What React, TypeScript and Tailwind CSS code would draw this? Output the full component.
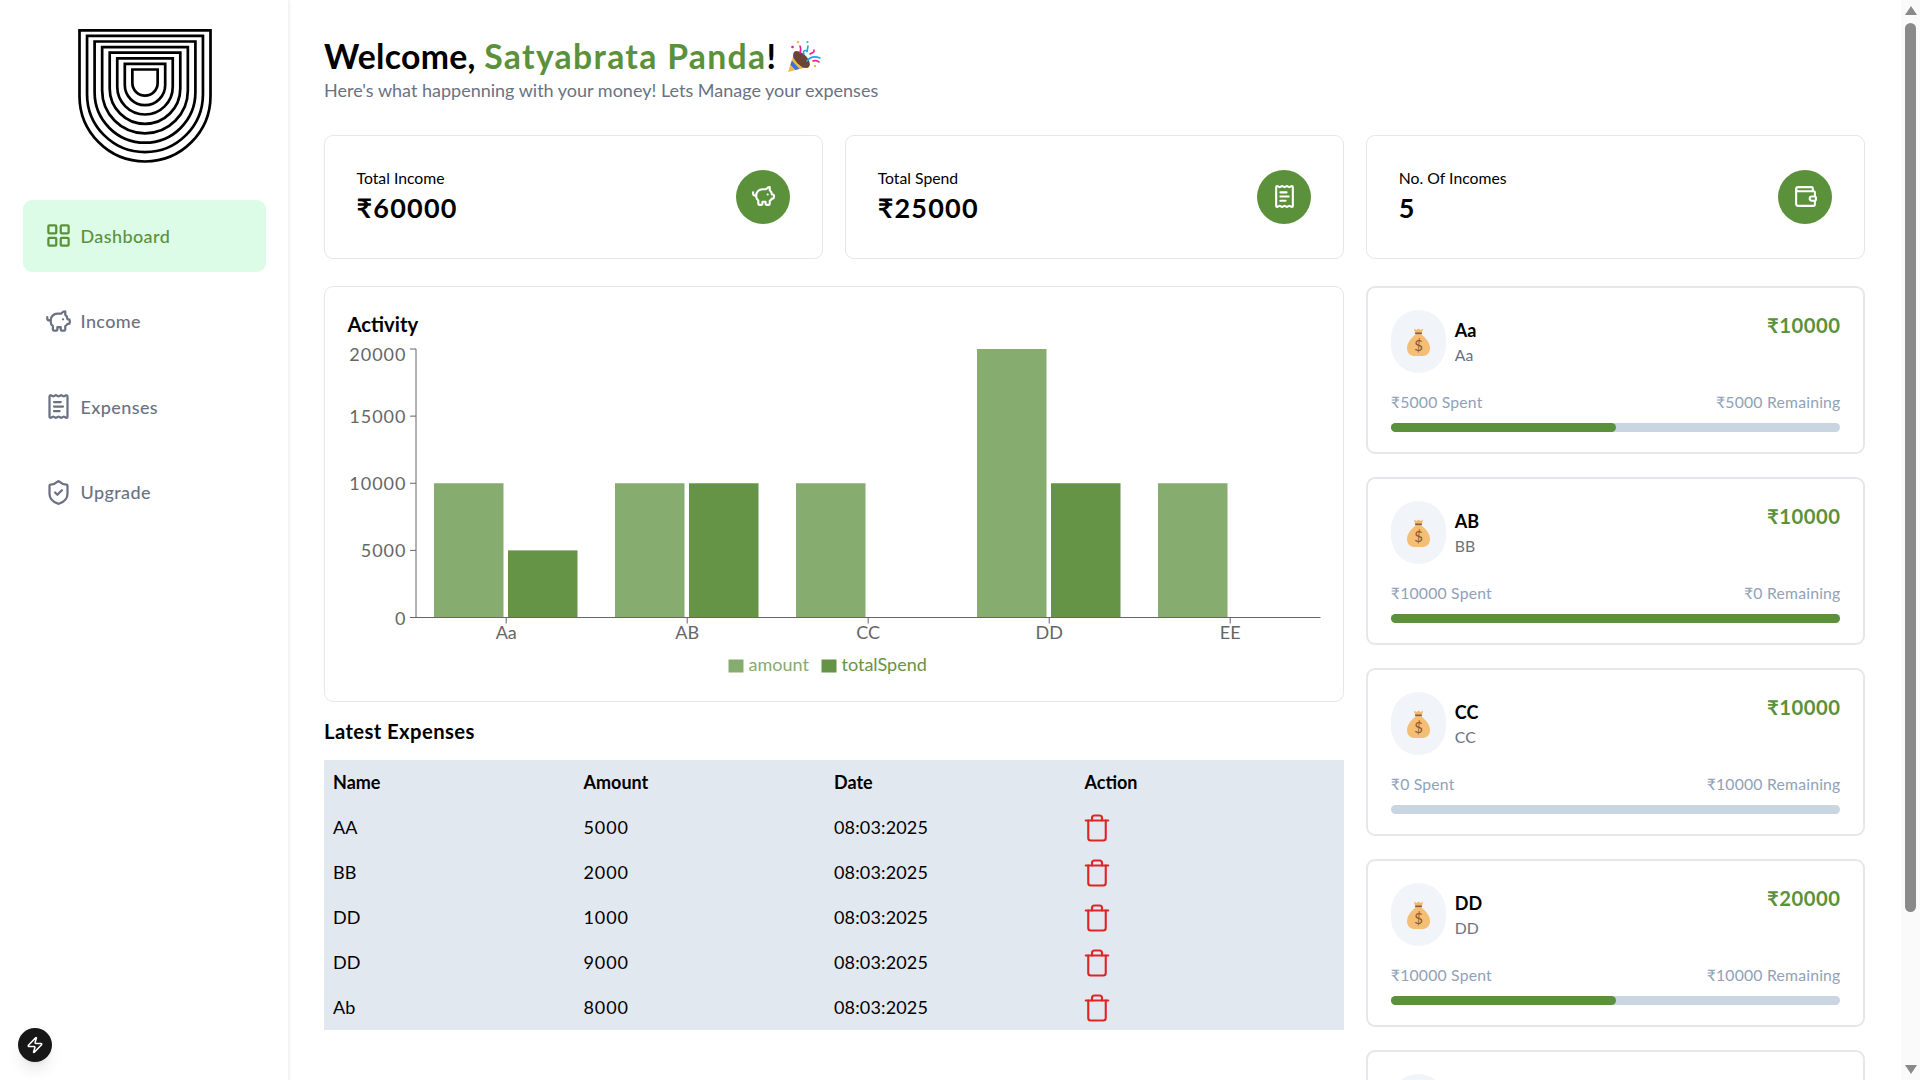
import { LayoutGrid, PiggyBank, ReceiptText, ShieldCheck, Wallet, Trash, Zap } from 'lucide-react';

const navItems = [
  { label: 'Dashboard', icon: LayoutGrid, active: true },
  { label: 'Income', icon: PiggyBank, active: false },
  { label: 'Expenses', icon: ReceiptText, active: false },
  { label: 'Upgrade', icon: ShieldCheck, active: false },
];

const stats = [
  { label: 'Total Income', value: '₹60000', icon: PiggyBank },
  { label: 'Total Spend', value: '₹25000', icon: ReceiptText },
  { label: 'No. Of Incomes', value: '5', icon: Wallet },
];

const budgets = [
  { name: 'Aa', sub: 'Aa', amount: 10000, spent: 5000 },
  { name: 'AB', sub: 'BB', amount: 10000, spent: 10000 },
  { name: 'CC', sub: 'CC', amount: 10000, spent: 0 },
  { name: 'DD', sub: 'DD', amount: 20000, spent: 10000 },
  { name: 'EE', sub: 'EE', amount: 10000, spent: 0 },
];

const expenses = [
  { name: 'AA', amount: 5000 },
  { name: 'BB', amount: 2000 },
  { name: 'DD', amount: 1000 },
  { name: 'DD', amount: 9000 },
  { name: 'Ab', amount: 8000 },
];

const chartData = [
  { name: 'Aa', amount: 10000, totalSpend: 5000 },
  { name: 'AB', amount: 10000, totalSpend: 10000 },
  { name: 'CC', amount: 10000, totalSpend: 0 },
  { name: 'DD', amount: 20000, totalSpend: 10000 },
  { name: 'EE', amount: 10000, totalSpend: 0 },
];

function Logo() {
  const rings = [0, 1, 2, 3, 4, 5, 6, 7];
  return (
    <svg width="134" height="134" viewBox="0 0 134 134" fill="none" stroke="#000" strokeWidth="2.7">
      {rings.map((i) => {
        const half = 65.5 - i * 7.55;
        const top = 1.3 + i * 5.6;
        const bottom = 132.5 - i * 9.4;
        const left = 67 - half;
        const right = 67 + half;
        return (
          <path
            key={i}
            d={`M${left} ${top}H${right}V${bottom - half}A${half} ${half} 0 0 1 ${left} ${bottom - half}Z`}
          />
        );
      })}
    </svg>
  );
}

// party popper, drawn because the installed emoji has another look
function Popper() {
  return (
    <svg width="36" height="36" viewBox="4 4 36 36" className="inline-block align-[-7px] ml-[11px]">
      <path d="M5 36L11.5 16.5L25 31Z" fill="#f4b942" />
      <path d="M8.8 24.6L16.4 32.8L12.4 34L7.4 28.8Z" fill="#3f6fd8" />
      <path d="M11.2 17.4L20.8 28.4L24 31L19.8 32L9.8 21.4Z" fill="#3f6fd8" opacity="0.85" />
      <ellipse cx="18.5" cy="23.5" rx="10.5" ry="5.5" transform="rotate(45 18.5 23.5)" fill="#6b4433" />
      <g fill="none" strokeLinecap="round" strokeWidth="1.6">
        <path d="M21 18c-2-3 2-5 3-2l1-6" stroke="#1aa9e6" />
        <path d="M24 25c3-4 8-5 13-3" stroke="#1aa9e6" />
        <path d="M27 18c2-1 5-2 4-4" stroke="#ec1c8e" />
        <path d="M17 17c1-3 1-5 0-7" stroke="#ec1c8e" />
        <path d="M30 25c2-1 5 0 6 1" stroke="#ec1c8e" />
      </g>
      <circle cx="15" cy="6" r="1.2" fill="#f4b942" />
      <circle cx="9.5" cy="11" r="1.3" fill="#ec1c8e" />
      <circle cx="32" cy="30" r="1.2" fill="#f4b942" />
      <circle cx="24.5" cy="6" r="1" fill="#1aa9e6" />
    </svg>
  );
}

function MoneyBag() {
  return (
    <svg width="23" height="28" viewBox="0 0 23 28">
      <path d="M7 0.5L9.5 2L11.5 0.5L13.5 2L16 0.5L15 5H8Z" fill="#f2b76c" />
      <rect x="8" y="4.5" width="7" height="2" rx="1" fill="#8a5a3a" />
      <path d="M8.5 6.5H14.5C19 10 23 15 23 20C23 25.5 19.5 28 15 28H8C3.5 28 0 25.5 0 20C0 15 4 10 8.5 6.5Z" fill="#f4bf75" />
      <text x="11.5" y="23" textAnchor="middle" fontSize="15" fill="#8a5a3a">
        $
      </text>
    </svg>
  );
}

function Sidebar() {
  return (
    <aside className="w-[289px] shrink-0 h-full border-r border-gray-100 shadow-sm py-[22.5px] pl-[23px] pr-[22px] relative">
      <div className="flex justify-center pt-[6px] mb-[37px]">
        <Logo />
      </div>
      {navItems.map((item) => (
        <div
          key={item.label}
          className={`flex items-center gap-[9px] h-[72px] mb-[13.5px] px-[22.5px] rounded-[9px] text-[18px] tracking-[0.4px] font-medium ${
            item.active ? 'bg-[#dcfce7] text-[#5b913b]' : 'text-gray-500'
          }`}
        >
          <item.icon size={27} strokeWidth={2} className="-ml-[1px]" />
          <span className="pt-[1px]">{item.label}</span>
        </div>
      ))}
    </aside>
  );
}

function StatCard({ label, value, icon: Icon }: { label: string; value: string; icon: typeof Wallet }) {
  return (
    <div className="flex items-center justify-between border border-gray-200 rounded-[9px] p-[31.5px] h-[124px]">
      <div>
        <div className="text-[15.75px] leading-[22.5px] text-black">{label}</div>
        <div className="text-[27px] leading-[36px] tracking-[1.2px] font-bold text-black">{value}</div>
      </div>
      <div className="flex items-center justify-center w-[54px] h-[54px] rounded-full bg-[#5b913b] text-white">
        <Icon size={25} />
      </div>
    </div>
  );
}

function ActivityChart() {
  const y = (v: number) => 617.5 - (v / 20000) * 268.5;
  return (
    <svg width="975" height="342" viewBox="347.5 344 975 342" className="block mt-[5px]">
      <g fontSize="18" fill="#666">
        {[0, 5000, 10000, 15000, 20000].map((v) => (
          <g key={v}>
            <line x1="409.5" x2="415.5" y1={y(v)} y2={y(v)} stroke="#666" />
            <text x="406" y={v === 20000 ? y(v) + 12 : y(v) + 7} textAnchor="end" letterSpacing="1">
              {v}
            </text>
          </g>
        ))}
        {chartData.map((d, i) => (
          <g key={d.name}>
            <rect x={433.5 + i * 181} y={y(d.amount)} width="69.5" height={617.5 - y(d.amount)} fill="#86ac6f" />
            {d.totalSpend > 0 && (
              <rect
                x={507.5 + i * 181}
                y={y(d.totalSpend)}
                width="69.5"
                height={617.5 - y(d.totalSpend)}
                fill="#659446"
              />
            )}
            <line x1={505.7 + i * 181} x2={505.7 + i * 181} y1="617.5" y2="623.5" stroke="#666" />
            <text x={505.7 + i * 181} y="639" textAnchor="middle">
              {d.name}
            </text>
          </g>
        ))}
      </g>
      <line x1="415.5" x2="415.5" y1="349" y2="617.5" stroke="#666" />
      <line x1="415.5" x2="1320" y1="617.5" y2="617.5" stroke="#666" />
      <rect x="728" y="659.5" width="15" height="13" fill="#86ac6f" />
      <text x="748" y="671" fontSize="18" fill="#86ac6f">
        amount
      </text>
      <rect x="821" y="659.5" width="15" height="13" fill="#659446" />
      <text x="841" y="671" fontSize="18" fill="#659446">
        totalSpend
      </text>
    </svg>
  );
}

function BudgetCard({ name, sub, amount, spent }: (typeof budgets)[number]) {
  const pct = (spent / amount) * 100;
  return (
    <div className="border-2 border-gray-200 rounded-[9px] p-[22.5px] h-[168px] shrink-0">
      <div className="flex justify-between">
        <div className="flex gap-[9px] items-center">
          <div className="flex items-center justify-center w-[55px] h-[63px] rounded-full bg-slate-100">
            <MoneyBag />
          </div>
          <div className="pt-[1px]">
            <div className="text-[18px] leading-[27px] font-bold text-black">{name}</div>
            <div className="text-[15.75px] leading-[22.5px] text-gray-500">{sub}</div>
          </div>
        </div>
        <div className="text-[20.25px] leading-[27px] tracking-[0.5px] font-bold text-[#5b913b] pt-[2px]">₹{amount}</div>
      </div>
      <div className="flex justify-between mt-[18px] text-[15.75px] leading-[22.5px] tracking-[0.2px] text-slate-400">
        <span>₹{spent} Spent</span>
        <span>₹{amount - spent} Remaining</span>
      </div>
      <div className="h-[9px] mt-[9px] rounded-full bg-slate-300">
        <div className="h-[9px] rounded-full bg-[#5b913b]" style={{ width: `${pct}%` }} />
      </div>
    </div>
  );
}

function Scrollbar() {
  return (
    <div className="w-[19px] shrink-0 h-full bg-[#fafafa] flex flex-col items-center relative">
      <div className="mt-[6px] w-0 h-0 border-x-[6px] border-x-transparent border-b-[9px] border-b-[#8a8a8a]" />
      <div className="mt-[8px] w-[11px] h-[889px] rounded-full bg-[#8a8a8a]" />
      <div className="mt-auto mb-[6px] w-0 h-0 border-x-[6px] border-x-transparent border-t-[9px] border-t-[#8a8a8a]" />
    </div>
  );
}

export default function App() {
  return (
    <div className="flex h-screen overflow-hidden bg-white font-['Lato','Liberation_Sans',sans-serif]">
      <Sidebar />

      <main className="flex-1 min-w-0 h-full overflow-hidden py-[36px] pl-[35px] pr-[36px]">
        <h2 className="text-[33.75px] leading-[40.5px] font-bold text-black">
          <span className="tracking-[0.3px]">Welcome, </span>
          <span className="text-[#5b913b] tracking-[1.3px]">Satyabrata Panda</span>!
          <Popper />
        </h2>
        <p className="text-[18px] leading-[27px] text-gray-500">
          Here's what happenning with your money! Lets Manage your expenses
        </p>

        <div className="grid grid-cols-3 gap-[22.5px] mt-[31px]">
          {stats.map((s) => (
            <StatCard key={s.label} {...s} />
          ))}
        </div>

        <div className="grid grid-cols-3 gap-[22.5px] mt-[27px]">
          <div className="col-span-2">
            <div className="border border-gray-200 rounded-[9px] px-[22.5px] pt-[22.5px] h-[416px]">
              <h2 className="text-[20.25px] leading-[30px] font-bold text-black">Activity</h2>
              <ActivityChart />
            </div>

            <h2 className="text-[20.25px] leading-[30px] tracking-[0.4px] font-bold text-black mt-[14px] mb-[14px]">
              Latest Expenses
            </h2>
            <div className="bg-[#e2e8f0] text-[18px] text-black">
              <div className="grid grid-cols-[250.5px_250.5px_250.5px_1fr] h-[45px] items-center px-[9px] pt-[1px] font-bold">
                <div>Name</div>
                <div>Amount</div>
                <div>Date</div>
                <div>Action</div>
              </div>
              {expenses.map((e, i) => (
                <div key={i} className="grid grid-cols-[250.5px_250.5px_250.5px_1fr] h-[45px] items-center px-[9px] pt-[1px]">
                  <div>{e.name}</div>
                  <div className="tracking-[0.9px]">{e.amount}</div>
                  <div className="tracking-[0.15px]">08:03:2025</div>
                  <div className="h-[30px]">
                    <Trash size={30} strokeWidth={1.7} className="text-[#dc2626] -ml-[3px]" />
                  </div>
                </div>
              ))}
            </div>
          </div>

          <div className="flex flex-col gap-[23px]">
            {budgets.map((b) => (
              <BudgetCard key={b.name} {...b} />
            ))}
          </div>
        </div>
      </main>

      <Scrollbar />

      <div className="fixed left-[18px] bottom-[18px] flex items-center justify-center w-[34px] h-[34px] rounded-full bg-neutral-900 text-white shadow-lg">
        <Zap size={18} />
      </div>
    </div>
  );
}
